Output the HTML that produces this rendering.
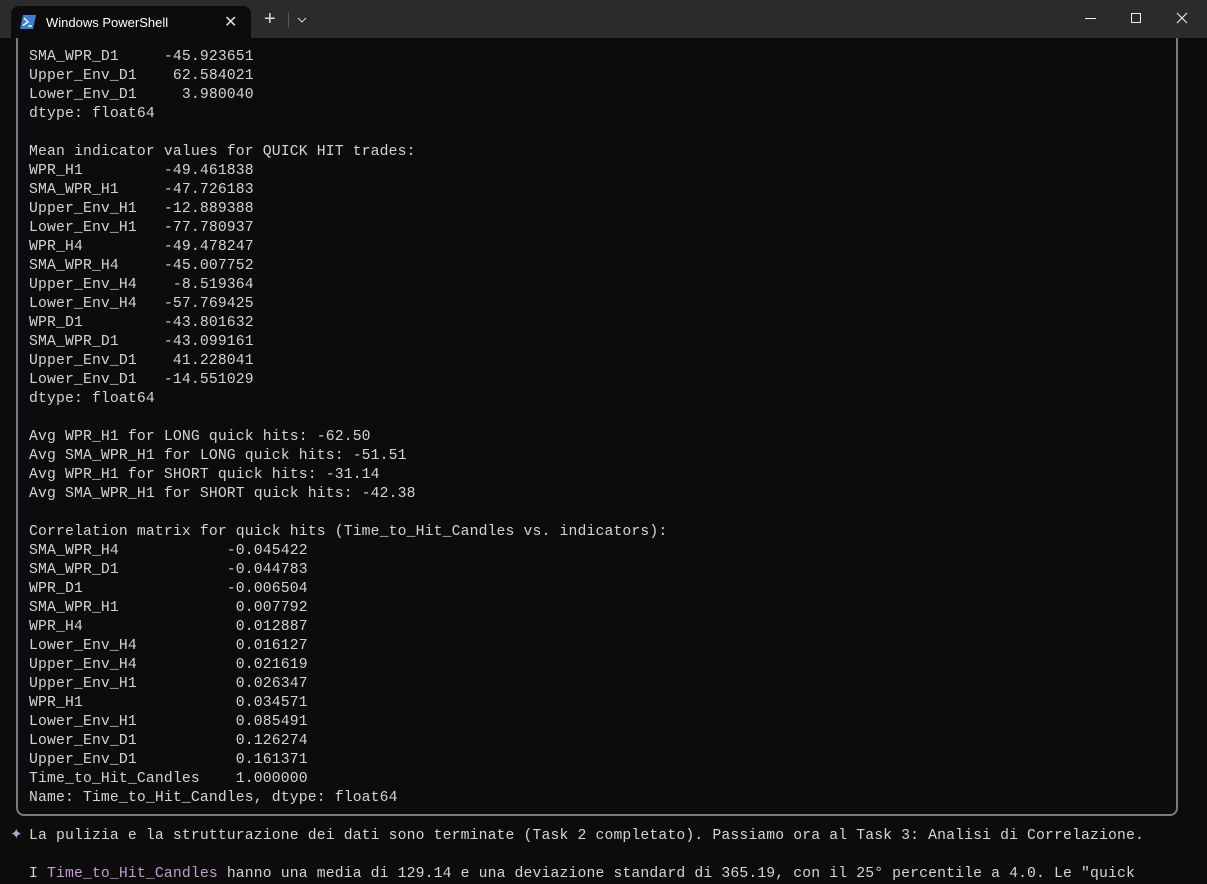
<!DOCTYPE html>
<html><head><style>
*{margin:0;padding:0;box-sizing:border-box}
body{width:1207px;height:881px;overflow:hidden;background:#0c0c0c;font-family:"Liberation Mono",monospace;color:#cccccc}
.bar{position:absolute;left:0;top:0;width:1207px;height:38px;background:#2b2b2b;z-index:2}
.tab{position:absolute;left:11px;top:6px;width:240px;height:32px;background:#0c0c0c;border-radius:8px 8px 0 0}
.tab .t{position:absolute;left:35px;top:9px;font:13px "Liberation Sans",sans-serif;color:#fff}
.tab .x{position:absolute;left:213px;top:6px;font:16px "Liberation Sans",sans-serif;color:#ddd}
.box{position:absolute;left:16px;top:30px;width:1162px;height:786px;border:2px solid #7a7a85;border-top:none;border-radius:0 0 8px 8px}
pre{position:absolute;left:29px;top:48px;font-size:14.75px;letter-spacing:0.14px;line-height:19px;font-family:"Liberation Mono",monospace;color:#d4d4d4}
.p{color:#c39bd3}
</style></head><body>
<div class="bar">
<div class="tab">
<svg style="position:absolute;left:9px;top:9px" width="16" height="14" viewBox="0 0 16 14"><path d="M3 0H16L13 14H0Z" fill="#3b7fd4"/><path d="M4 3L8 7L3 10.5" stroke="#fff" stroke-width="1.4" fill="none"/><path d="M8 11H12" stroke="#fff" stroke-width="1.4"/></svg>
<div class="t">Windows PowerShell</div><div class="x">✕</div></div>
<div style="position:absolute;left:264px;top:8px;font:20px 'Liberation Sans',sans-serif;color:#ddd">+</div>
<div style="position:absolute;left:288px;top:12px;width:1px;height:16px;background:#555"></div>
<svg style="position:absolute;left:297px;top:17px" width="10" height="6"><path d="M1 1L5 5L9 1" stroke="#ddd" fill="none"/></svg>
<div style="position:absolute;left:1085px;top:18px;width:11px;height:1px;background:#eee"></div>
<div style="position:absolute;left:1131px;top:13px;width:10px;height:10px;border:1px solid #eee"></div>
<svg style="position:absolute;left:1176px;top:12px" width="12" height="12"><path d="M1 1L11 11M11 1L1 11" stroke="#eee" stroke-width="1.1"/></svg>
</div>
<div class="box"></div>
<pre>SMA_WPR_D1     -45.923651
Upper_Env_D1    62.584021
Lower_Env_D1     3.980040
dtype: float64

Mean indicator values for QUICK HIT trades:
WPR_H1         -49.461838
SMA_WPR_H1     -47.726183
Upper_Env_H1   -12.889388
Lower_Env_H1   -77.780937
WPR_H4         -49.478247
SMA_WPR_H4     -45.007752
Upper_Env_H4    -8.519364
Lower_Env_H4   -57.769425
WPR_D1         -43.801632
SMA_WPR_D1     -43.099161
Upper_Env_D1    41.228041
Lower_Env_D1   -14.551029
dtype: float64

Avg WPR_H1 for LONG quick hits: -62.50
Avg SMA_WPR_H1 for LONG quick hits: -51.51
Avg WPR_H1 for SHORT quick hits: -31.14
Avg SMA_WPR_H1 for SHORT quick hits: -42.38

Correlation matrix for quick hits (Time_to_Hit_Candles vs. indicators):
SMA_WPR_H4            -0.045422
SMA_WPR_D1            -0.044783
WPR_D1                -0.006504
SMA_WPR_H1             0.007792
WPR_H4                 0.012887
Lower_Env_H4           0.016127
Upper_Env_H4           0.021619
Upper_Env_H1           0.026347
WPR_H1                 0.034571
Lower_Env_H1           0.085491
Lower_Env_D1           0.126274
Upper_Env_D1           0.161371
Time_to_Hit_Candles    1.000000
Name: Time_to_Hit_Candles, dtype: float64

La pulizia e la strutturazione dei dati sono terminate (Task 2 completato). Passiamo ora al Task 3: Analisi di Correlazione.

I <span class="p">Time_to_Hit_Candles</span> hanno una media di 129.14 e una deviazione standard di 365.19, con il 25° percentile a 4.0. Le "quick</pre>
<div style="position:absolute;left:10px;top:825px;font-size:15px;color:#c39bd3;font-family:'DejaVu Sans',sans-serif">✦</div>
</body></html>
